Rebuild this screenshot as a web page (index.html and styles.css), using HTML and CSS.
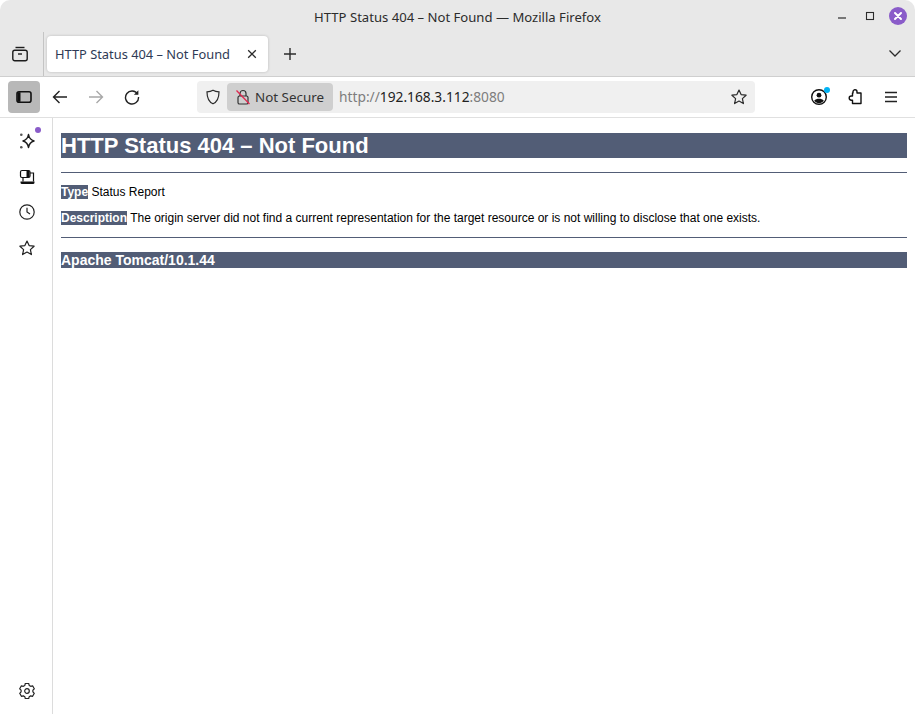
FILE: index.html
```html
<!DOCTYPE html>
<html lang="en">
<head>
<meta charset="utf-8">
<title>HTTP Status 404 – Not Found</title>
<link rel="stylesheet" href="styles.css">
</head>
<body>
<div class="window">
  <header class="titlebar">
    <div class="window-title">HTTP Status 404 – Not Found — Mozilla Firefox</div>
    <div class="window-controls">
      <svg class="wc" width="16" height="16" viewBox="0 0 16 16"><path d="M4 10h8" stroke="#2c2c2c" stroke-width="1.2" fill="none"/></svg>
      <svg class="wc" width="16" height="16" viewBox="0 0 16 16"><rect x="4.5" y="4.500" width="7" height="7" stroke="#2c2c2c" stroke-width="1.100" fill="none"/></svg>
      <svg class="wc wc-close" width="18" height="18" viewBox="0 0 18 18"><circle cx="9" cy="9" r="9" fill="#8a5cc9"/><path d="M6 6l6 6M12 6l-6 6" stroke="#fff" stroke-width="2" stroke-linecap="round"/></svg>
    </div>
  </header>
  <div class="tabbar">
    <div class="view-btn">
      <svg width="16" height="16" viewBox="0 0 16 16" fill="none" stroke="#1c1c1c" stroke-width="1.400"><path d="M3.500 1.500h9"/><rect x="0.800" y="4.200" width="14.400" height="10.600" rx="2"/><path d="M6 8h4"/></svg>
    </div>
    <div class="tab-sep"></div>
    <div class="tab">
      <span class="tab-label">HTTP Status 404 – Not Found</span>
      <svg width="12" height="12" viewBox="0 0 12 12"><path d="M2.200 2.200l7.600 7.600M9.800 2.200l-7.600 7.600" stroke="#2b2b2b" stroke-width="1.300" fill="none"/></svg>
    </div>
    <svg class="new-tab" width="14" height="14" viewBox="0 0 14 14"><path d="M7 1v12M1 7h12" stroke="#2b2b2b" stroke-width="1.400" fill="none"/></svg>
    <svg class="tab-list" width="14" height="14" viewBox="0 0 14 14"><path d="M1.500 4.500L7 10l5.500-5.500" stroke="#2b2b2b" stroke-width="1.300" fill="none"/></svg>
  </div>
  <nav class="toolbar">
    <div class="tool tool-active">
      <svg width="16" height="16" viewBox="0 0 16 16"><rect x="1" y="2.700" width="14" height="10.600" rx="2" fill="none" stroke="#111" stroke-width="1.600"/><rect x="1.500" y="3.200" width="3" height="9.600" fill="#111"/></svg>
    </div>
    <div class="tool">
      <svg width="16" height="16" viewBox="0 0 16 16" fill="none" stroke="#222" stroke-width="1.400"><path d="M15 8H1.500M7.500 2L1.500 8l6 6"/></svg>
    </div>
    <div class="tool">
      <svg width="16" height="16" viewBox="0 0 16 16" fill="none" stroke="#a8a8a8" stroke-width="1.400"><path d="M1 8h13.500M8.500 2l6 6-6 6"/></svg>
    </div>
    <div class="tool">
      <svg width="16" height="16" viewBox="0 0 16 16" fill="none" stroke="#222" stroke-width="1.400"><path d="M13.600 5.200A6.500 6.500 0 1 0 14.500 8"/><path d="M14.400 1.200v4.500H9.900z" fill="#222" stroke="none"/></svg>
    </div>
    <div class="urlbar">
      <svg class="shield" width="16" height="16" viewBox="0 0 16 16" fill="none" stroke="#2b2b2b" stroke-width="1.200"><path d="M8 1.200c1.800 1 3.800 1.500 6 1.700 0 5.800-1.700 9.800-6 11.900-4.300-2.100-6-6.100-6-11.900 2.200-.2 4.200-.7 6-1.700z"/></svg>
      <div class="secure-pill">
        <svg width="16" height="16" viewBox="0 0 16 16" fill="none"><path d="M5 7V4.500a3 3 0 0 1 6 0V7" stroke="#333" stroke-width="1.200"/><rect x="3" y="7" width="10" height="8" rx="1.600" stroke="#333" stroke-width="1.200"/><path d="M1.500 1.500l13 13.500" stroke="#e22850" stroke-width="1.300"/></svg>
        <span class="secure-label">Not Secure</span>
      </div>
      <div class="url"><span class="url-dim">http://</span><span class="url-host">192.168.3.112</span><span class="url-dim">:8080</span></div>
      <svg class="star" width="16" height="16" viewBox="0 0 16 16" fill="none" stroke="#2b2b2b" stroke-width="1.200" stroke-linejoin="round"><path d="M8 1l2.100 4.600 5 .6-3.700 3.400 1 5L8 12.100l-4.400 2.500 1-5L.9 6.200l5-.6z"/></svg>
    </div>
    <div class="tool-right">
      <div class="tool">
        <svg width="18" height="18" viewBox="0 0 18 18"><circle cx="9" cy="9" r="7.300" fill="none" stroke="#111" stroke-width="1.400"/><circle cx="9" cy="7.200" r="2.400" fill="#111"/><path d="M4.200 12.800c1.200-1.400 2.900-2 4.800-2s3.600.6 4.800 2c-1.200 1.500-2.900 2.300-4.800 2.300s-3.600-.8-4.800-2.300z" fill="#111"/></svg>
        <span class="badge badge-blue"></span>
      </div>
      <div class="tool">
        <svg width="16" height="16" viewBox="0 0 16 16" fill="none" stroke="#111" stroke-width="1.400" stroke-linejoin="round"><path d="M6 2.800a2 2 0 0 1 4 0V4h4v10.500H5.500V11.200H4.300a2.100 2.100 0 0 1 0-4.200h1.200V4H6z"/></svg>
      </div>
      <div class="tool">
        <svg width="16" height="16" viewBox="0 0 16 16" fill="none" stroke="#222" stroke-width="1.400"><path d="M2 3.500h12M2 8h12M2 12.500h12"/></svg>
      </div>
    </div>
  </nav>
  <div class="main">
    <aside class="sidebar">
      <div class="side-top">
        <div class="side-btn">
          <svg width="18" height="18" viewBox="0 0 18 18"><path d="M10.500 2.500c.6 3.600 2.400 5.600 5.500 6.500-3.100.9-4.900 2.900-5.500 6.500-.6-3.600-2.400-5.600-5.500-6.500 3.100-.9 4.900-2.900 5.500-6.500z" fill="none" stroke="#1c1c1c" stroke-width="1.500" stroke-linejoin="round"/><circle cx="3.300" cy="2.800" r="1.300" fill="#555"/><circle cx="3.300" cy="15.200" r="1.300" fill="#555"/></svg>
          <span class="badge badge-purple"></span>
        </div>
        <div class="side-btn">
          <svg width="16" height="16" viewBox="0 0 16 16" fill="none" stroke="#111" stroke-width="1.200"><rect x="1.500" y="1.500" width="9.500" height="7" rx="1.500"/><path d="M7.500 2h3v6h-3z" fill="#111" stroke="none"/><path d="M11 4h3.500v8.500M4 8.500v4"/><path d="M1.500 12.500h14v1a1.500 1.500 0 0 1-1.500 1.500H3a1.500 1.500 0 0 1-1.500-1.500z" fill="#111" stroke="none"/></svg>
        </div>
        <div class="side-btn side-btn-tight">
          <svg width="16" height="16" viewBox="0 0 16 16" fill="none" stroke="#222" stroke-width="1.200"><circle cx="8" cy="8" r="7.200"/><path d="M8 3.800V8l3 2"/></svg>
        </div>
        <div class="side-btn">
          <svg width="16" height="16" viewBox="0 0 16 16" fill="none" stroke="#222" stroke-width="1.200" stroke-linejoin="round"><path d="M8 1l2.100 4.600 5 .6-3.700 3.400 1 5L8 12.100l-4.400 2.500 1-5L.9 6.200l5-.6z"/></svg>
        </div>
      </div>
      <div class="side-btn">
        <svg width="16" height="16" viewBox="0 0 16 16" fill="none" stroke="#222" stroke-width="1.200" stroke-linejoin="round"><path d="M6.300 1h3.400l.5 1.900 1.500.9 1.900-.5 1.700 3-1.400 1.400v1.700l1.400 1.400-1.700 3-1.900-.5-1.500.9-.5 1.900H6.300l-.5-1.900-1.500-.9-1.900.5-1.700-3 1.400-1.400V7.700L.7 6.300l1.700-3 1.900.5 1.500-.9z" transform="translate(0 -.5)"/><circle cx="8" cy="8" r="2.300"/></svg>
      </div>
    </aside>
    <main class="page">
      <h1 class="status-title">HTTP Status 404 – Not Found</h1>
      <hr class="line">
      <p class="para"><b class="tag">Type</b> Status Report</p>
      <p class="para"><b class="tag">Description</b> The origin server did not find a current representation for the target resource or is not willing to disclose that one exists.</p>
      <hr class="line">
      <h3 class="server">Apache Tomcat/10.1.44</h3>
    </main>
  </div>
</div>
</body>
</html>
```
FILE: styles.css
```css
* { box-sizing: border-box; }
html, body { margin: 0; height: 100%; background: #fff; overflow: hidden; }
.window {
  height: 714px; display: flex; flex-direction: column;
  font-family: "Noto Sans", sans-serif; color: #222;
}
.titlebar {
  height: 32px; background: #e8e8e8; display: flex; align-items: center; justify-content: center;
  border-radius: 10px 10px 0 0; position: relative;
}
.window-title { font-size: 13.100px; color: #2c2c2c; margin-bottom: -1px; }
.window-controls {
  position: absolute; right: 8px; top: 7px; display: flex; align-items: center; gap: 12px;
}
.wc-close { margin-left: -1px; }
.tabbar {
  height: 45px; background: #e8e8e8; border-bottom: 1px solid #cfcfcf;
  display: flex; align-items: flex-start; position: relative;
}
.view-btn { width: 43px; height: 44px; display: flex; align-items: center; justify-content: center; padding: 0 3px 0 0; }
.tab-sep { width: 1px; height: 44px; background: #c4c4c4; }
.tab {
  margin: 4px 0 0 3px; width: 221px; height: 36px; background: #fff; border-radius: 4px;
  box-shadow: 0 0 3px rgba(0,0,0,.2); display: flex; align-items: center; justify-content: space-between;
  padding: 0 10px 0 8px;
}
.tab-label { font-size: 12.850px; color: #2e3a55; white-space: nowrap; }
.new-tab { margin: 15px 0 0 15px; }
.tab-list { position: absolute; right: 13px; top: 14px; }
.toolbar {
  height: 41px; background: #fff; border-bottom: 1px solid #e0e0e0;
  display: flex; align-items: center; padding: 0 0 1px 8px;
}
.tool {
  width: 32px; height: 32px; border-radius: 4px; display: flex; align-items: center; justify-content: center;
  margin-right: 4px; position: relative; flex: none;
}
.tool-active { background: #b8b8b8; }
.urlbar {
  flex: none; width: 558px; height: 32px; margin-left: 45px; background: #f0f0f0; border-radius: 4px;
  display: flex; align-items: center; position: relative; padding-left: 8px;
}
.secure-pill {
  margin-left: 6px; width: 106px; height: 28px; background: #cfcfcf; border-radius: 4px;
  display: flex; align-items: center; gap: 4px; padding-left: 8px;
}
.secure-label { font-size: 13.400px; color: #333; white-space: nowrap; }
.url { margin-left: 6px; font-size: 13.750px; white-space: nowrap; }
.url-dim { color: #7d7d7d; }
.url-host { color: #222; }
.star { position: absolute; right: 8px; top: 8px; }
.tool-right { display: flex; flex: none; margin-left: 48px; }
.badge { position: absolute; border-radius: 50%; width: 6px; height: 6px; }
.badge-blue { background: #00b3f4; top: 6px; right: 5px; }
.badge-purple { background: #8a5cc9; top: 2px; right: 2px; }
.main { flex: 1; display: flex; min-height: 0; }
.sidebar {
  width: 53px; border-right: 1px solid #dcdcdc; display: flex; flex-direction: column; justify-content: space-between;
  align-items: center; padding: 7px 0 7px 2px; background: #fff;
}
.side-top { display: flex; flex-direction: column; gap: 4px; }
.side-btn { width: 32px; height: 32px; display: flex; align-items: center; justify-content: center; position: relative; }
.side-btn-tight { margin-top: -1px; }
.page { flex: 1; padding: 0 8px; font-family: "Liberation Sans", Arial, sans-serif; font-size: 12px; color: #000; }
.status-title {
  font-size: 22px; line-height: 25px; font-weight: 700; color: #fff; background: #525d76; margin: 14.740px 0;
}
.line { height: 1px; background: #525d76; border: none; margin: 8px 0; }
.status-title + .line { margin-top: 14.740px; }
.para { margin: 12px 0; }
.tag { color: #fff; background: #525d76; }
.server { font-size: 14px; font-weight: 700; color: #fff; background: #525d76; margin: 14px 0; }
```
